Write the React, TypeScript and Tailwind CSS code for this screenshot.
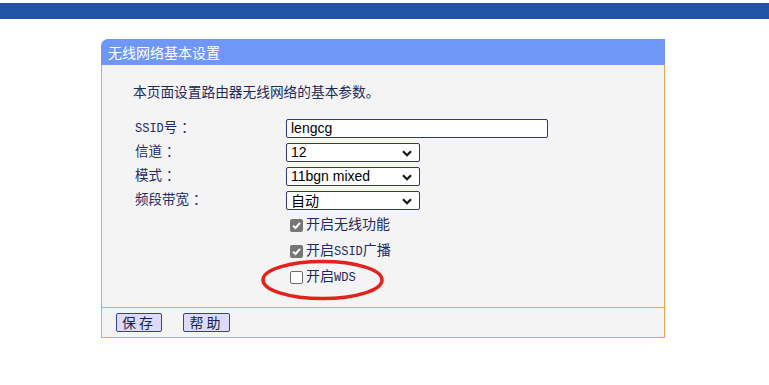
import React from "react";

const cjk = { fontFamily: '"Liberation Mono", "Noto Sans CJK SC", monospace' };
const sans = { fontFamily: '"Noto Sans CJK SC", sans-serif' };
const arial = { fontFamily: '"Liberation Sans", Arial, sans-serif' };

function Chevron() {
  return (
    <svg width="10" height="7" viewBox="0 0 10 7" className="absolute right-[7px] top-[6px]">
      <path d="M1 1.2 L5 5.2 L9 1.2" fill="none" stroke="#111" strokeWidth="2.2" />
    </svg>
  );
}

function Select({ value }: { value: string }) {
  return (
    <div
      className="relative h-[19px] w-[134px] rounded-[2px] border border-[#2f3580] bg-white pl-[4px] text-[14px] leading-[17px] text-black"
      style={value === "自动" ? sans : arial}
    >
      {value}
      <Chevron />
    </div>
  );
}

function Check({ checked }: { checked: boolean }) {
  if (checked) {
    return (
      <div className="flex h-[13px] w-[13px] items-center justify-center rounded-[2px] bg-[#767676]">
        <svg width="11" height="11" viewBox="0 0 11 11">
          <path d="M2 5.6 L4.5 8 L9 2.8" fill="none" stroke="#fff" strokeWidth="2" />
        </svg>
      </div>
    );
  }
  return <div className="h-[13px] w-[13px] rounded-[2px] border border-[#6d6d6d] bg-white" />;
}

function Mono({ children }: { children: React.ReactNode }) {
  return <span className="text-[12px]">{children}</span>;
}

function Label({ children }: { children: React.ReactNode }) {
  return (
    <div className="flex h-[24px] w-[151px] items-center pt-[2px] text-[13.5px] text-[#1d2a66]" style={cjk}>
      {children}
      <span className="ml-[4px]">：</span>
    </div>
  );
}

function CheckRow({ checked, children }: { checked: boolean; children: React.ReactNode }) {
  return (
    <div className="flex h-[26px] items-center pl-[4px]">
      <Check checked={checked} />
      <span className="ml-[3px] text-[14px] text-[#1d2a66]" style={cjk}>
        {children}
      </span>
    </div>
  );
}

export default function App() {
  return (
    <div className="relative h-[385px] w-[769px] overflow-hidden bg-white">
      <div className="mt-[3px] h-[16px] w-full bg-[#2154a6]" />
      <div className="ml-[101px] mt-[20px] w-[564px]">
        <div
          className="flex h-[26px] items-center rounded-tl-[7px] bg-[#6f97f8] pl-[7px] text-[14px] text-white"
          style={sans}
        >
          无线网络基本设置
        </div>
        <div className="border-x border-[#eda35a] bg-[#f4f4f4] pb-[17px] pt-[16px]">
          <div className="h-[20px] pl-[31px] text-[13.7px] leading-[20px] text-[#1d2a5e]" style={sans}>
            本页面设置路由器无线网络的基本参数。
          </div>
          <div className="mt-[15px] pl-[33px]">
            <div className="flex items-center">
              <Label>
                <Mono>SSID</Mono>号
              </Label>
              <div
                className="h-[19px] w-[262px] rounded-[2px] border border-[#2f3580] bg-white pl-[4px] text-[14px] leading-[17px] text-black"
                style={arial}
              >
                lengcg
              </div>
            </div>
            <div className="flex items-center">
              <Label>信道</Label>
              <Select value="12" />
            </div>
            <div className="flex items-center">
              <Label>模式</Label>
              <Select value="11bgn mixed" />
            </div>
            <div className="flex items-center">
              <Label>频段带宽</Label>
              <Select value="自动" />
            </div>
            <div className="pl-[151px]">
              <CheckRow checked>开启无线功能</CheckRow>
              <CheckRow checked>
                开启<Mono>SSID</Mono>广播
              </CheckRow>
              <CheckRow checked={false}>
                开启<Mono>WDS</Mono>
              </CheckRow>
            </div>
          </div>
        </div>
        <div className="flex h-[31px] items-center gap-[21px] border border-[#eda35a] bg-[#f4f4f4] pl-[14px]">
          <button
            className="h-[19px] w-[46px] rounded-[2px] border border-[#3a3f8e] bg-[#dcdcfa] text-[14px] leading-[17px] tracking-[3px] text-[#1a1f4a]"
            style={sans}
          >
            保存
          </button>
          <button
            className="h-[19px] w-[47px] rounded-[2px] border border-[#3a3f8e] bg-[#dcdcfa] text-[14px] leading-[17px] tracking-[3px] text-[#1a1f4a]"
            style={sans}
          >
            帮助
          </button>
        </div>
      </div>
      <svg className="absolute left-[258px] top-[257px]" width="130" height="48" viewBox="0 0 130 48">
        <ellipse cx="64.5" cy="23" rx="59.5" ry="18.5" fill="none" stroke="#e3221b" strokeWidth="3.5" />
      </svg>
    </div>
  );
}
